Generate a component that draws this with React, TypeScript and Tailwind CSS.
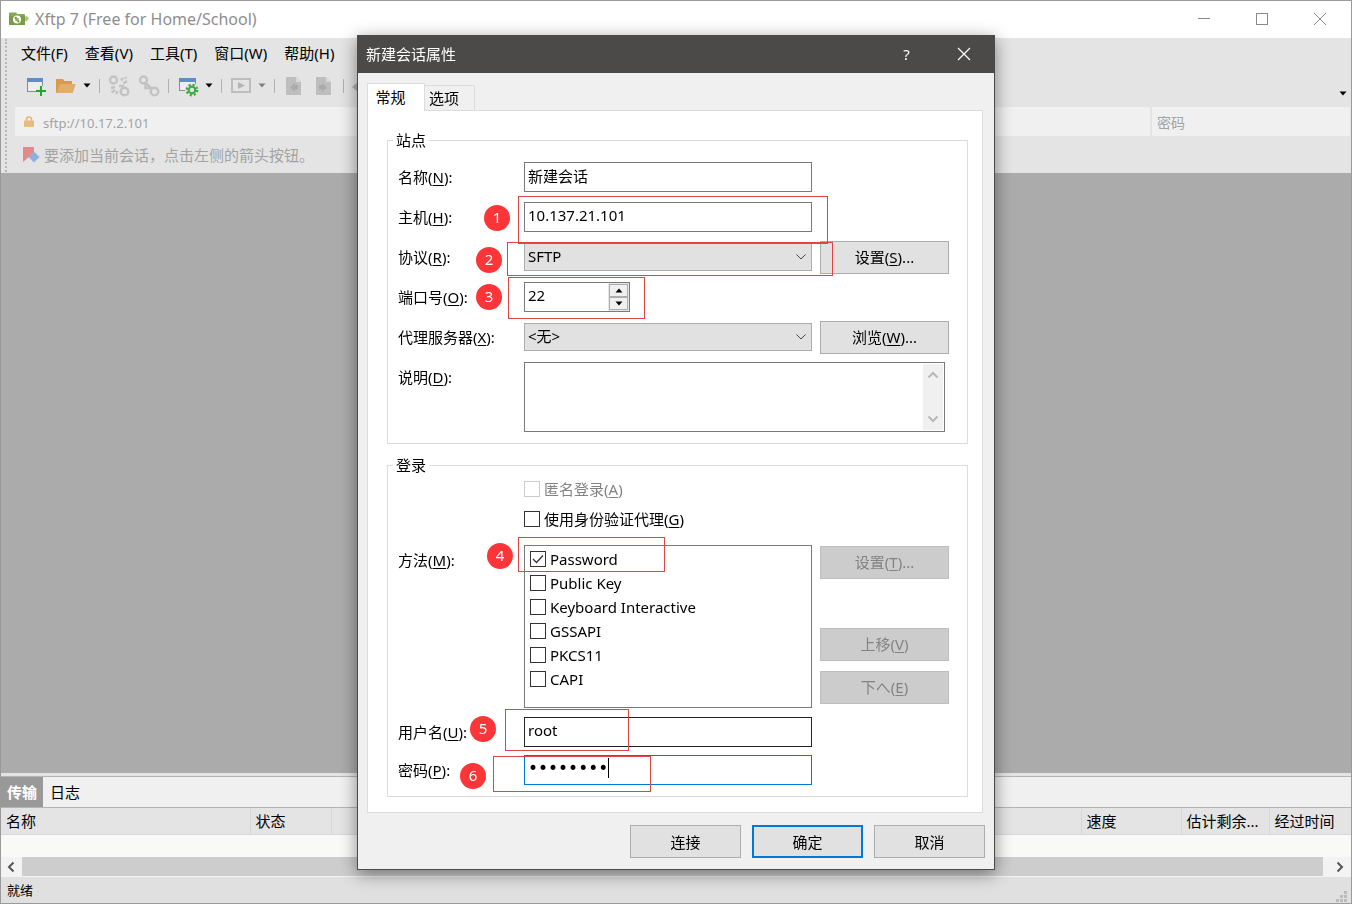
import React, { useState } from 'react';
import clsx from 'clsx';

const methods = ['Password', 'Public Key', 'Keyboard Interactive', 'GSSAPI', 'PKCS11', 'CAPI'];

const menus = [
  { text: '文件', hotkey: 'F' },
  { text: '查看', hotkey: 'V' },
  { text: '工具', hotkey: 'T' },
  { text: '窗口', hotkey: 'W' },
  { text: '帮助', hotkey: 'H' },
];

// Numbered steps drawn over the dialog
const steps = [
  { n: 1, badge: 'left-[126px] top-[169px]', box: 'left-[160px] top-[160px] w-[310px] h-[48px]' },
  { n: 2, badge: 'left-[118px] top-[211px]', box: 'left-[149px] top-[206px] w-[326px] h-[34px]' },
  { n: 3, badge: 'left-[118px] top-[248px]', box: 'left-[150px] top-[241px] w-[137px] h-[42px]' },
  { n: 4, badge: 'left-[129px] top-[507px]', box: 'left-[160px] top-[501px] w-[147px] h-[35px]' },
  { n: 5, badge: 'left-[112px] top-[680px]', box: 'left-[147px] top-[673px] w-[124px] h-[42px]' },
  { n: 6, badge: 'left-[102px] top-[727px]', box: 'left-[135px] top-[720px] w-[158px] h-[36px]' },
];

const Hot: React.FC<{ text: string; hotkey: string; tail?: string }> = ({ text, hotkey, tail = '' }) => (
  <>
    {text}(<span className="underline underline-offset-2">{hotkey}</span>){tail}
  </>
);

const Caret: React.FC<{ className?: string }> = ({ className }) => (
  <svg viewBox="0 0 8 5" className={clsx('w-2 h-[5px]', className)} fill="currentColor">
    <path d="M0.5 0.5h7L4 4.5z" />
  </svg>
);

const Chevron: React.FC<{ className?: string }> = ({ className }) => (
  <svg viewBox="0 0 12 8" className={className} fill="none" stroke="currentColor">
    <path d="M1.5 1.5L6 6l4.500-4.500" />
  </svg>
);

const AppIcon = () => (
  <svg viewBox="0 0 20 14" className="w-5 h-[14px]">
    <path d="M1 0.500h6l1.500 1.500H15q1 0 1 1V13H1q-1 0-1-1V1.500q0-1 1-1z" fill="#87a850" />
    <path d="M0 4h16v9H1q-1 0-1-1z" fill="#7b9c46" />
    <circle cx="8" cy="7.500" r="4" fill="#fff" />
    <path d="M7.200 9V5M5.800 6.500l1.400-1.700M8.900 6v4.200M10.300 8.600l-1.400 1.700" stroke="#6f9233" strokeWidth="1.200" fill="none" />
    <path d="M16 4l1 1 0.500-1.500L20 6.500l-2.500 3L17 8.500l-1 1z" fill="#a9c878" />
  </svg>
);

const NewIcon = () => (
  <svg viewBox="0 0 22 22" className="w-[22px] h-[22px]">
    <rect x="2.500" y="3.500" width="15" height="13" fill="#eee" stroke="#8b8b8b" />
    <path d="M2 3h16v4H2z" fill="#5b8fc9" />
    <path d="M16 11v10M11 16h10" stroke="#e4e4e4" strokeWidth="4" />
    <path d="M16 11v10M11 16h10" stroke="#22a52c" strokeWidth="2" />
  </svg>
);

const FolderIcon = () => (
  <svg viewBox="0 0 22 22" className="w-[22px] h-[22px]">
    <path d="M1 4h7l1.500 2H17v3h3.500l-3 9H1z" fill="#d79a4f" />
    <path d="M5 9h15.500l-3 9H1.500z" fill="#e2ad68" />
  </svg>
);

const LinkIcon: React.FC<{ broken?: boolean }> = ({ broken }) => (
  <svg viewBox="0 0 22 22" className="w-[22px] h-[22px]" fill="none" stroke="#c3c3c3" strokeWidth="2.400">
    <circle cx="5.500" cy="5" r="3.500" />
    <circle cx="16.500" cy="16.500" r="3.800" />
    {broken ? (
      <>
        <path d="M13 5.500l2-2.500M15.500 8.500l3.500-2.500M17 3.500l1.500-1.500" />
        <path d="M3 13l4-1M3.500 17.500l3.500-2.500M8 19l1.500-3" />
        <path d="M11 11h4v3" />
      </>
    ) : (
      <path d="M7.500 8v5h6M8 8l6 6" />
    )}
  </svg>
);

const GearIcon = () => (
  <svg viewBox="0 0 22 22" className="w-[22px] h-[22px]">
    <rect x="2.500" y="3.500" width="16" height="12" fill="#eee" stroke="#8b8b8b" />
    <path d="M2 3h17v4H2z" fill="#5b8fc9" />
    <circle cx="15" cy="15" r="7" fill="#e4e4e4" />
    <circle cx="15" cy="15" r="5.200" fill="none" stroke="#3cab44" strokeWidth="2.400" strokeDasharray="2.042 2.042" />
    <circle cx="15" cy="15" r="3.300" fill="#e4e4e4" stroke="#3cab44" strokeWidth="2.200" />
  </svg>
);

const PlayIcon = () => (
  <svg viewBox="0 0 22 22" className="w-[22px] h-[22px]">
    <rect x="2" y="4" width="18" height="13" fill="none" stroke="#bdbdbd" strokeWidth="2" />
    <path d="M8 7l7 3.500L8 14z" fill="#b5b5b5" />
  </svg>
);

const FileIcon: React.FC<{ flip?: boolean }> = ({ flip }) => (
  <svg viewBox="0 0 22 22" className="w-[22px] h-[22px]">
    <path d="M3 2h10l5 5v13H3z" fill="#bebebe" />
    <path d="M13 2l5 5h-5z" fill="#d8d8d8" />
    <path d={flip ? 'M15 10h-3V8l-5 4.500 5 4.500v-2.500h3z' : 'M6 10h3V8l5 4.500L9 17v-2.500H6z'} fill="#ababab" />
  </svg>
);

const Sep: React.FC<{ className?: string }> = ({ className }) => (
  <span className={clsx('w-[7px] flex justify-center', className)}>
    <span className="w-px h-[14px] bg-[#b0b0b0]" />
  </span>
);

const ToolButton: React.FC<{ label: string; children: React.ReactNode }> = ({ label, children }) => (
  <button aria-label={label} className="w-7 h-7 flex items-center justify-center">
    {children}
  </button>
);

const MoreButton: React.FC<{ label: string; muted?: boolean }> = ({ label, muted }) => (
  <button aria-label={label} className={clsx('w-[10px] h-7 flex items-center justify-center', muted ? 'text-[#808080]' : 'text-black')}>
    <Caret />
  </button>
);

type PushButtonProps = React.ButtonHTMLAttributes<HTMLButtonElement> & { primary?: boolean };

const PushButton: React.FC<PushButtonProps> = ({ className, primary, ...rest }) => (
  <button
    className={clsx(
      'h-[33px] bg-[#e1e1e1] disabled:bg-[#cccccc] disabled:border-[#bfbfbf] disabled:text-[#838383]',
      primary ? 'border-2 border-[#0078d7]' : 'border border-[#adadad]',
      className
    )}
    {...rest}
  />
);

const Combo: React.FC<{ id: string; value: string }> = ({ id, value }) => (
  <div className="relative w-72">
    <select id={id} className="appearance-none w-full h-7 pl-[3px] pb-0.5 bg-[#e1e1e1] border border-[#adadad] outline-none">
      <option>{value}</option>
    </select>
    <Chevron className="absolute right-[5px] top-[10px] w-3 h-2 text-[#444] pointer-events-none" />
  </div>
);

const Check: React.FC<{ checked?: boolean; disabled?: boolean; onChange?: () => void; children: React.ReactNode }> = ({
  checked = false,
  disabled,
  onChange,
  children,
}) => (
  <label className={clsx('flex items-center', disabled && 'text-[#838383]')}>
    <span className="relative flex mr-1">
      <input
        type="checkbox"
        checked={checked}
        disabled={disabled}
        onChange={onChange}
        className="appearance-none w-4 h-4 border border-[#333] disabled:border-[#ccc] bg-white"
      />
      {checked && (
        <svg viewBox="0 0 16 16" className="absolute inset-0 w-4 h-4 pointer-events-none" fill="none" stroke="#333" strokeWidth="1.300">
          <path d="M3 8l3.500 3.500L13 4.500" />
        </svg>
      )}
    </span>
    {children}
  </label>
);

const rowLabel = 'w-[126px] shrink-0';
const textBox = 'w-72 h-[30px] border px-[3px] pb-1 bg-white outline-none';

const SessionDialog: React.FC = () => {
  const [host, setHost] = useState('10.137.21.101');
  const [name, setName] = useState('新建会话');
  const [port, setPort] = useState(22);
  const [userName, setUserName] = useState('root');
  const [password, setPassword] = useState('password');
  const [agent, setAgent] = useState(false);
  const [enabled, setEnabled] = useState<string[]>(['Password']);

  const toggle = (m: string) => {
    setEnabled(enabled.includes(m) ? enabled.filter((x) => x !== m) : [...enabled, m]);
  };

  return (
    <div role="dialog" aria-label="新建会话属性" className="relative w-[638px] border border-[#4b4a48] bg-[#f0f0f0] shadow-[0_4px_16px_rgba(0,0,0,0.45)]">
      <header className="h-[37px] pl-2 pr-0.5 pb-0.5 bg-[#4b4a48] text-white flex items-center">
        <h2 className="flex-1">新建会话属性</h2>
        <button aria-label="Help" className="w-[57px] h-full">?</button>
        <button aria-label="Close" className="w-[57px] h-full flex items-center justify-center">
          <svg viewBox="0 0 14 14" className="w-[14px] h-[14px]" stroke="currentColor" strokeWidth="1.200">
            <path d="M1 1l12 12M13 1L1 13" />
          </svg>
        </button>
      </header>

      <div className="pl-[9px] pt-[10px] pb-3 pr-[11px]">
        <div role="tablist" className="flex items-end h-[27px]">
          <button role="tab" aria-selected="true" className="relative z-10 -mb-px w-[58px] h-7 pr-[11px] pb-0.5 border border-b-0 border-[#dcdcdc] bg-white self-start">
            常规
          </button>
          <button role="tab" aria-selected="false" className="w-[50px] h-[25px] pr-[11px] border border-l-0 border-b-0 border-[#dcdcdc]">
            选项
          </button>
        </div>

        <div className="border border-[#dcdcdc] bg-white pl-[19px] pr-[14px] pt-[19px] pb-[15px]">
          <fieldset className="border border-[#dcdcdc] pl-[10px] pr-[18px] pt-[6px] pb-[11px]">
            <legend className="-ml-[5px] px-[3px] leading-[21px]">站点</legend>
            <div className="h-10 flex items-center">
              <label htmlFor="name" className={rowLabel}><Hot text="名称" hotkey="N" tail=":" /></label>
              <input id="name" value={name} onChange={(e) => setName(e.target.value)} className={clsx(textBox, 'border-[#7a7a7a]')} />
            </div>
            <div className="h-10 flex items-center">
              <label htmlFor="host" className={rowLabel}><Hot text="主机" hotkey="H" tail=":" /></label>
              <input id="host" value={host} onChange={(e) => setHost(e.target.value)} className={clsx(textBox, 'border-[#7a7a7a]')} />
            </div>
            <div className="h-10 flex items-center">
              <label htmlFor="protocol" className={rowLabel}><Hot text="协议" hotkey="R" tail=":" /></label>
              <Combo id="protocol" value="SFTP" />
              <PushButton className="ml-2 w-[129px]"><Hot text="设置" hotkey="S" tail="..." /></PushButton>
            </div>
            <div className="h-10 flex items-center">
              <label htmlFor="port" className={rowLabel}><Hot text="端口号" hotkey="O" tail=":" /></label>
              <div className="w-[106px] h-[30px] flex border border-[#7a7a7a] bg-white">
                <input
                  id="port"
                  inputMode="numeric"
                  value={port}
                  onChange={(e) => setPort(Number(e.target.value) || 0)}
                  className="flex-1 min-w-0 px-[3px] pb-1 outline-none"
                />
                <div className="w-[21px] p-px bg-[#e6e6e6] flex flex-col">
                  <button aria-label="Increase" onClick={() => setPort(port + 1)} className="flex-1 flex items-center justify-center border border-[#adadad] bg-[#f0f0f0]">
                    <Caret className="rotate-180" />
                  </button>
                  <button aria-label="Decrease" onClick={() => setPort(port - 1)} className="flex-1 flex items-center justify-center border border-[#adadad] bg-[#f0f0f0]">
                    <Caret />
                  </button>
                </div>
              </div>
            </div>
            <div className="h-10 flex items-center">
              <label htmlFor="proxy" className={rowLabel}><Hot text="代理服务器" hotkey="X" tail=":" /></label>
              <Combo id="proxy" value="<无>" />
              <PushButton className="ml-2 w-[129px]"><Hot text="浏览" hotkey="W" tail="..." /></PushButton>
            </div>
            <div className="pt-[5px] flex">
              <label htmlFor="desc" className={clsx(rowLabel, 'h-[30px] leading-[30px]')}><Hot text="说明" hotkey="D" tail=":" /></label>
              <div className="w-[421px] h-[70px] flex border border-[#7a7a7a] p-px">
                <textarea id="desc" className="flex-1 resize-none outline-none px-1" />
                <div className="w-5 bg-[#f0f0f0] text-[#b8b8b8] flex flex-col items-center justify-between py-[7px]">
                  <Chevron className="w-3 h-2 rotate-180 stroke-2" />
                  <Chevron className="w-3 h-2 stroke-2" />
                </div>
              </div>
            </div>
          </fieldset>

          <fieldset className="mt-[11px] border border-[#dcdcdc] pl-[10px] pr-[18px] pb-[11px]">
            <legend className="-ml-[5px] px-[3px] leading-[21px]">登录</legend>
            <div className="pl-[126px] flex flex-col gap-1">
              <div className="h-[26px] flex items-center">
                <Check disabled><Hot text="匿名登录" hotkey="A" /></Check>
              </div>
              <div className="h-[26px] flex items-center">
                <Check checked={agent} onChange={() => setAgent(!agent)}><Hot text="使用身份验证代理" hotkey="G" /></Check>
              </div>
            </div>
            <div className="mt-[13px] flex">
              <span id="methods" className={clsx(rowLabel, 'h-[30px] leading-[30px]')}><Hot text="方法" hotkey="M" tail=":" /></span>
              <ul aria-labelledby="methods" className="w-72 h-[163px] border border-[#7a7a7a] px-[5px] py-px">
                {methods.map((m) => (
                  <li key={m} className="h-6 flex items-center">
                    <Check checked={enabled.includes(m)} onChange={() => toggle(m)}>{m}</Check>
                  </li>
                ))}
              </ul>
              <div className="ml-2 w-[129px] pt-px pb-1 flex flex-col">
                <PushButton disabled className="pb-0.5"><Hot text="设置" hotkey="T" tail="..." /></PushButton>
                <PushButton disabled className="mt-auto pb-0.5"><Hot text="上移" hotkey="V" /></PushButton>
                <PushButton disabled className="mt-[10px] pb-0.5"><Hot text="下へ" hotkey="E" /></PushButton>
              </div>
            </div>
            <div className="mt-[9px] flex items-center">
              <label htmlFor="user" className={rowLabel}><Hot text="用户名" hotkey="U" tail=":" /></label>
              <input id="user" value={userName} onChange={(e) => setUserName(e.target.value)} className={clsx(textBox, 'border-[#222]')} />
            </div>
            <div className="mt-2 flex items-center">
              <label htmlFor="pass" className={rowLabel}><Hot text="密码" hotkey="P" tail=":" /></label>
              <div className="relative flex">
                <input
                  id="pass"
                  type="password"
                  value={password}
                  onChange={(e) => setPassword(e.target.value)}
                  className={clsx(textBox, "border-[#0078d7] text-[17px] font-['DejaVu_Sans',sans-serif]")}
                />
                <span className="absolute left-[84px] top-[3px] w-px h-5 bg-black" />
              </div>
            </div>
          </fieldset>
        </div>
      </div>

      <footer className="pr-[9px] pb-[11px] flex justify-end gap-[11px]">
        <PushButton className="w-[111px]">连接</PushButton>
        <PushButton primary className="w-[111px]">确定</PushButton>
        <PushButton className="w-[111px]">取消</PushButton>
      </footer>

      {steps.map((s) => (
        <React.Fragment key={s.n}>
          <span className={clsx('absolute border border-[#e04444] pointer-events-none z-20', s.box)} />
          <span className={clsx('absolute w-[26px] h-[26px] rounded-full bg-[#fb3538] text-white text-center leading-6 pointer-events-none z-20', s.badge)}>
            {s.n}
          </span>
        </React.Fragment>
      ))}
    </div>
  );
};

const App: React.FC = () => {
  return (
    <div className="h-screen flex flex-col border border-[#9a9a9a] bg-[#e4e4e4] text-black text-[15px] leading-5 font-['Noto_Sans','Noto_Sans_CJK_SC',sans-serif] overflow-hidden">
      <header className="h-[37px] pl-2 pr-0.5 pb-0.5 bg-white text-[#8e8e8e] flex items-center">
        <AppIcon />
        <h1 className="ml-[6px] flex-1 text-base">Xftp 7 (Free for Home/School)</h1>
        <button aria-label="Minimize" className="w-[58px] h-full flex items-center justify-center">
          <span className="w-3 h-px bg-[#8a8a8a]" />
        </button>
        <button aria-label="Maximize" className="w-[58px] h-full flex items-center justify-center">
          <span className="w-3 h-3 border border-[#8a8a8a]" />
        </button>
        <button aria-label="Close window" className="w-[58px] h-full flex items-center justify-center">
          <svg viewBox="0 0 12 12" className="w-3 h-3" stroke="#8a8a8a">
            <path d="M0 0l12 12M12 0L0 12" />
          </svg>
        </button>
      </header>

      <div className="h-[135px] flex">
        <span className="ml-1 mr-2 my-px border-l-2 border-dotted border-[#b8b8b8]" />
        <div className="flex-1 flex flex-col">
          <nav className="h-[30px] pl-[6px] flex items-center gap-[17px]">
            {menus.map((m) => (
              <button key={m.hotkey}>{m.text}({m.hotkey})</button>
            ))}
          </nav>
          <div className="h-[39px] pl-[7px] pr-1 pb-1 flex items-center gap-0.5">
            <ToolButton label="New session"><NewIcon /></ToolButton>
            <ToolButton label="Open"><FolderIcon /></ToolButton>
            <MoreButton label="Open list" />
            <Sep className="ml-0.5" />
            <ToolButton label="Disconnect"><LinkIcon broken /></ToolButton>
            <ToolButton label="Reconnect"><LinkIcon /></ToolButton>
            <Sep />
            <ToolButton label="Properties"><GearIcon /></ToolButton>
            <MoreButton label="Properties list" />
            <Sep className="ml-0.5" />
            <ToolButton label="Run"><PlayIcon /></ToolButton>
            <MoreButton label="Run list" muted />
            <Sep className="ml-0.5" />
            <ToolButton label="Upload"><FileIcon flip /></ToolButton>
            <ToolButton label="Download"><FileIcon /></ToolButton>
            <Sep />
            <ToolButton label="Back">
              <svg viewBox="0 0 22 22" className="w-[22px] h-[22px]" fill="#b0b0b0">
                <path d="M0 12l7-6v4h12v4H7v4z" />
              </svg>
            </ToolButton>
            <span className="flex-1" />
            <button aria-label="More tools" className="self-end w-2 h-5 flex items-center justify-center">
              <Caret />
            </button>
          </div>
          <div className="h-[29px] mr-px bg-[#f0f0f0] text-[#a3a3a3] flex items-center">
            <svg viewBox="0 0 12 12" className="ml-2 w-3 h-3 shrink-0">
              <path d="M3.500 5V3.500a2.500 2.500 0 0 1 5 0V5" fill="none" stroke="#e3b77c" strokeWidth="1.600" />
              <rect x="1" y="4.500" width="10" height="6.500" rx="0.500" fill="#e8bb80" />
            </svg>
            <input aria-label="Address" defaultValue="sftp://10.17.2.101" className="ml-2 pt-0.5 flex-1 min-w-0 text-[13px] outline-none" />
            <input aria-label="密码" placeholder="密码" className="w-[200px] h-full pl-[5px] pt-0.5 text-sm border-l-2 border-[#e4e4e4] outline-none placeholder:text-[#a3a3a3]" />
          </div>
          <p className="flex-1 pl-[7px] pt-px text-[#a3a3a3] flex items-center gap-1">
            <svg viewBox="0 0 18 18" className="w-[18px] h-[18px]">
              <path d="M1 1h11v9l-5 1-6 5z" fill="#e58a8a" />
              <path d="M12 5.500l5.500 5.500-5.500 5.500L6.500 11z" fill="#8fb0dc" />
            </svg>
            要添加当前会话，点击左侧的箭头按钮。
          </p>
        </div>
      </div>

      <main className="flex-1 bg-[#ababab]" />

      <section>
        <div className="mt-[3px] h-8 border-y border-[#b4b4b4] bg-[#f0f0f0] flex items-stretch">
          <button className="w-[42px] bg-[#999] text-white font-bold">传输</button>
          <button className="px-[7px]">日志</button>
        </div>
        <div className="bg-[#f9f9f7] h-[49px]">
          <table className="w-full table-fixed border-collapse text-left">
            <colgroup>
              <col className="w-[249px]" />
              <col className="w-[81px]" />
              <col />
              <col className="w-[100px]" />
              <col className="w-[88px]" />
              <col className="w-[82px]" />
            </colgroup>
            <thead>
              <tr className="h-[26px] bg-[#e4e4e4] border-b border-[#d5d8e0]">
                <th className="font-normal pl-[5px] border-r border-[#d5d8da]">名称</th>
                <th className="font-normal pl-[5px] border-r border-[#d5d8da]">状态</th>
                <th className="border-r border-[#d5d8da]" />
                <th className="font-normal pl-[5px] border-r border-[#d5d8da]">速度</th>
                <th className="font-normal pl-[5px] border-r border-[#d5d8da] whitespace-nowrap">估计剩余...</th>
                <th className="font-normal pl-[5px] whitespace-nowrap">经过时间</th>
              </tr>
            </thead>
          </table>
        </div>
        <div className="h-5 bg-[#f3f3f3] flex items-center text-[#555]">
          <button aria-label="Scroll left" className="w-[21px] pr-0.5 flex justify-center">
            <Chevron className="w-3 h-2 rotate-90 stroke-2" />
          </button>
          <span className="flex-1 h-full bg-[#cdcdcd] border-b border-[#f3f3f3]" />
          <button aria-label="Scroll right" className="w-7 pl-[6px] flex justify-center">
            <Chevron className="w-3 h-2 -rotate-90 stroke-2" />
          </button>
        </div>
      </section>

      <footer className="h-[26px] pl-[6px] pr-[3px] bg-[#e0e0e0] text-[13px] flex items-center justify-between">
        就绪
        <svg viewBox="0 0 12 12" className="w-3 h-3 self-end" fill="#bcbcbc">
          <path d="M8 0h3v3H8zM8 4h3v3H8zM4 4h3v3H4zM8 8h3v3H8zM4 8h3v3H4zM0 8h3v3H0z" />
        </svg>
      </footer>

      <div className="fixed inset-0 pt-px flex items-center justify-center">
        <SessionDialog />
      </div>
    </div>
  );
};

export default App;
